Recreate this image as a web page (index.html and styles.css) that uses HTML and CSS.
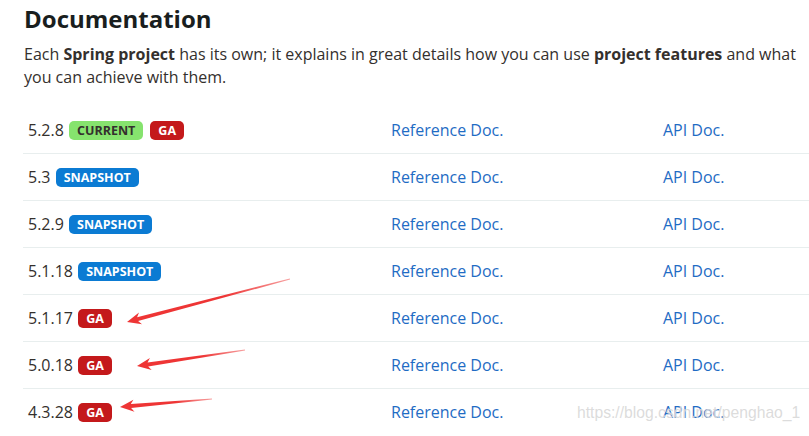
FILE: index.html
```html
<!DOCTYPE html>
<html>
<head>
<meta charset="utf-8">
<link rel="stylesheet" href="styles.css">
</head>
<body>
<div class="page">
  <h1 class="title">Documentation</h1>
  <p class="intro">Each <strong>Spring project</strong> has its own; it explains in great details how you can use <strong>project features</strong> and what you can achieve with them.</p>
  <div class="versions">
    <div class="row">
      <div class="ver">5.2.8 <span class="badge current">CURRENT</span><span class="badge ga">GA</span></div>
      <a class="ref">Reference Doc.</a>
      <a class="api">API Doc.</a>
    </div>
    <div class="row">
      <div class="ver">5.3 <span class="badge snap">SNAPSHOT</span></div>
      <a class="ref">Reference Doc.</a>
      <a class="api">API Doc.</a>
    </div>
    <div class="row">
      <div class="ver">5.2.9 <span class="badge snap">SNAPSHOT</span></div>
      <a class="ref">Reference Doc.</a>
      <a class="api">API Doc.</a>
    </div>
    <div class="row">
      <div class="ver">5.1.18 <span class="badge snap">SNAPSHOT</span></div>
      <a class="ref">Reference Doc.</a>
      <a class="api">API Doc.</a>
    </div>
    <div class="row">
      <div class="ver">5.1.17 <span class="badge ga">GA</span></div>
      <a class="ref">Reference Doc.</a>
      <a class="api">API Doc.</a>
    </div>
    <div class="row">
      <div class="ver">5.0.18 <span class="badge ga">GA</span></div>
      <a class="ref">Reference Doc.</a>
      <a class="api">API Doc.</a>
    </div>
    <div class="row">
      <div class="ver">4.3.28 <span class="badge ga">GA</span></div>
      <a class="ref">Reference Doc.</a>
      <a class="api">API Doc.</a>
    </div>
  </div>
</div>
<svg class="arrows" width="809" height="436" viewBox="0 0 809 436">
  <defs>
    <linearGradient id="fade1" gradientUnits="userSpaceOnUse" x1="127" y1="322" x2="290" y2="279">
      <stop offset="0.6" stop-color="#ee3535"/>
      <stop offset="1" stop-color="#f7a0a0"/>
    </linearGradient>
    <linearGradient id="fade2" gradientUnits="userSpaceOnUse" x1="137" y1="366" x2="245" y2="350">
      <stop offset="0.6" stop-color="#ee3535"/>
      <stop offset="1" stop-color="#f7a0a0"/>
    </linearGradient>
    <linearGradient id="fade3" gradientUnits="userSpaceOnUse" x1="120" y1="407" x2="212" y2="399">
      <stop offset="0.6" stop-color="#ee3535"/>
      <stop offset="1" stop-color="#f7a0a0"/>
    </linearGradient>
  </defs>
  <polygon fill="url(#fade1)" points="127,322 142.0,324.2 138.1,321.1 290.1,279.5 289.9,278.5 137.1,317.3 139.0,312.6"/>
  <polygon fill="url(#fade2)" points="137,366 151.7,369.9 148.2,366.4 245.1,350.5 244.9,349.5 147.6,362.4 149.9,358.0"/>
  <polygon fill="url(#fade3)" points="120,407 134.5,411.8 131.1,408.0 212,399.5 212,398.5 130.8,404.0 133.4,399.8"/>
</svg>
<div class="watermark">https://blog.csdn.net/penghao_1</div>
</body>
</html>
```
FILE: styles.css
```css
html, body {
  margin: 0;
  padding: 0;
  background: #ffffff;
  overflow: hidden;
}
body {
  width: 809px;
  height: 436px;
  position: relative;
  font-family: "Open Sans", "Liberation Sans", sans-serif;
  color: #34302d;
}
.page {
  padding-left: 23px;
  width: 800px;
}
.title {
  margin: 0;
  padding-top: 3px;
  padding-left: 1px;
  font-family: "Open Sans", sans-serif;
  font-weight: 700;
  font-size: 24px;
  line-height: 32px;
  color: #191e1e;
}
.intro {
  margin: 8px 0 0 1px;
  font-size: 16px;
  line-height: 23px;
  width: 780px;
}
.intro strong {
  font-weight: 700;
}
.versions {
  margin-top: 18px;
}
.row {
  display: grid;
  grid-template-columns: 363px 272px 1fr;
  height: 46px;
  align-items: center;
  border-bottom: 1px solid #e8eeee;
  font-size: 16px;
}
.row:last-child {
  border-bottom: none;
}
.ver {
  padding-left: 5px;
  display: flex;
  align-items: center;
  white-space: pre;
}
.ref, .api {
  color: #1f6cc4;
  padding-left: 5px;
}
.badge {
  display: inline-block;
  font-size: 12.5px;
  font-weight: 700;
  line-height: 19px;
  height: 19px;
  padding: 0 8px;
  border-radius: 5px;
  color: #ffffff;
  margin-left: 1px;
  margin-right: 6px;
}
.current {
  background: #86e36e;
  color: #34302d;
}
.ga {
  background: #c4191b;
}
.snap {
  background: #0b7bd3;
}
.arrows {
  position: absolute;
  left: 0;
  top: 0;
  pointer-events: none;
}
.watermark {
  position: absolute;
  left: 577px;
  top: 404px;
  font-family: "Liberation Sans", Arial, sans-serif;
  font-size: 15.7px;
  color: rgba(200, 200, 200, 0.65);
  text-shadow: 0 0 1px rgba(255,255,255,0.9);
  pointer-events: none;
}
```
